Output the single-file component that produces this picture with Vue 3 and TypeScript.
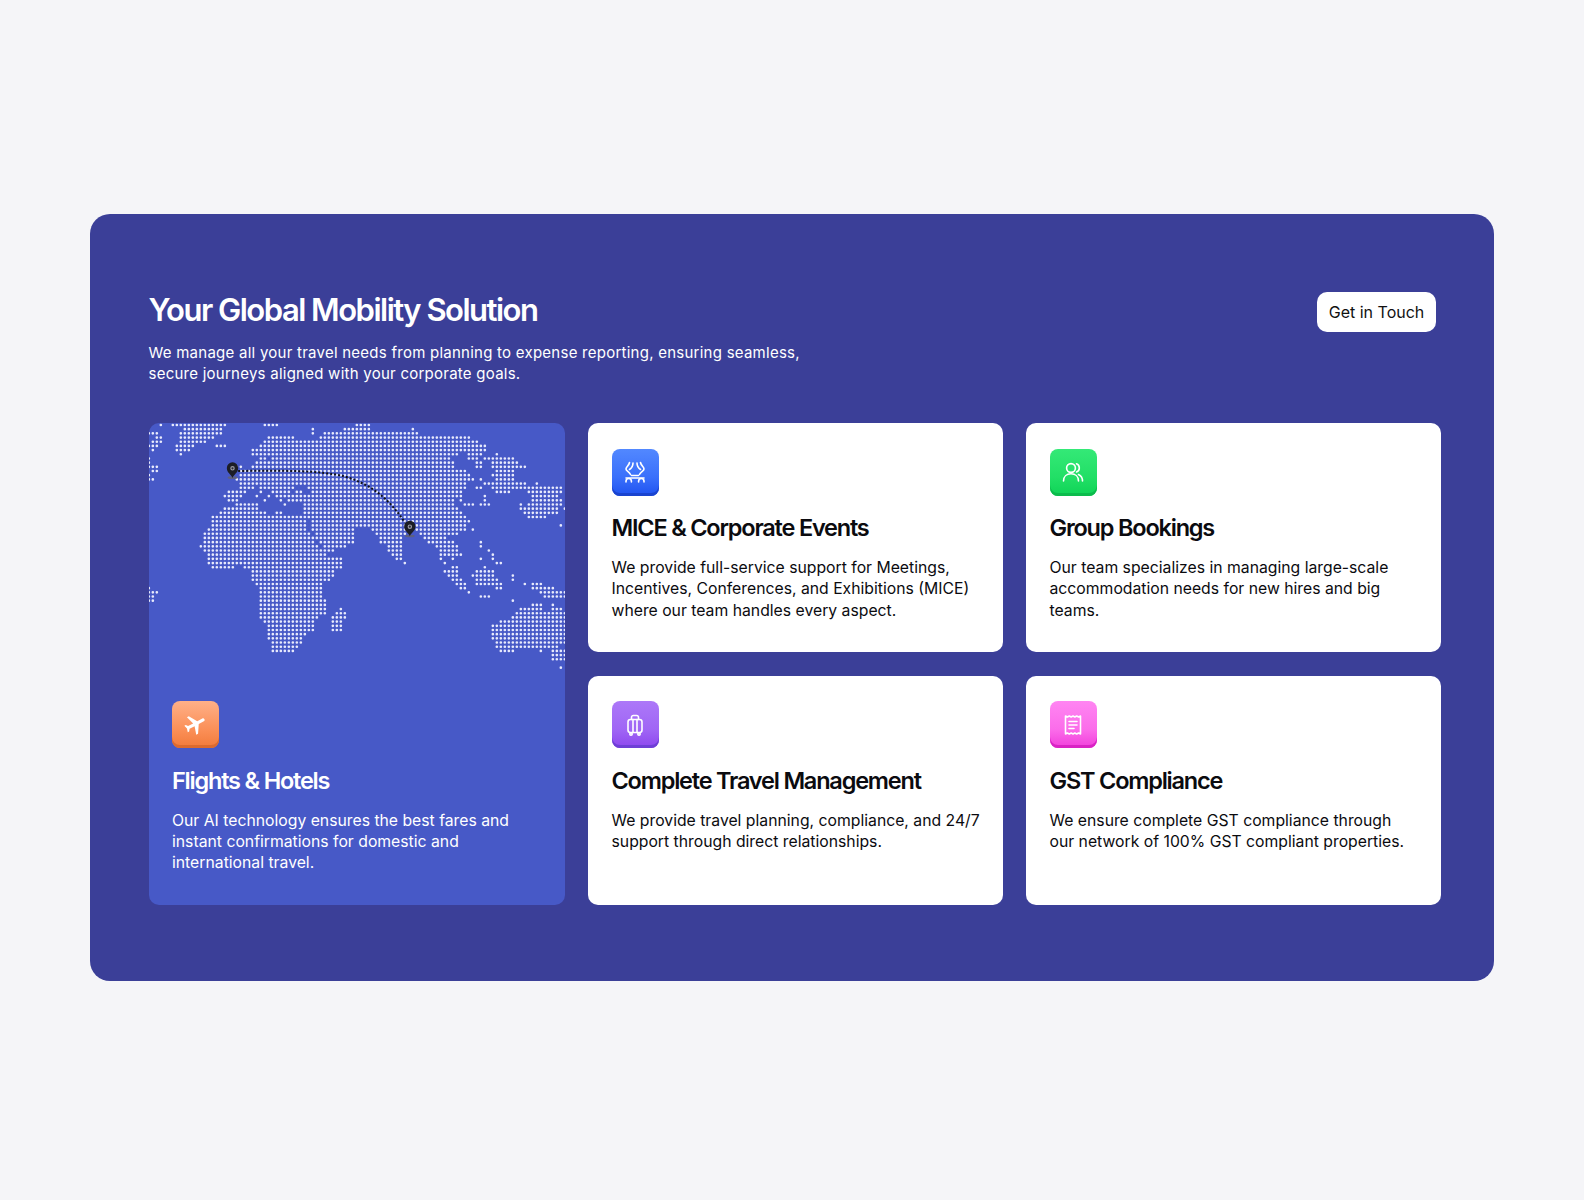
<script setup lang="ts">
import { computed } from 'vue'

const rows: number[][] = [
  [40,40,70,235,348,385,625,660],
  [110,225,490,500,595,665,790,790],
  [5,25,105,215,490,490,535,545,560,810],
  [25,45,105,195,360,430,515,960],
  [20,40,100,170,350,440,450,990],
  [5,30,90,130,205,230,340,440,445,1000,1015,1015],
  [12,12,90,120,315,1010],
  [100,100,315,930,965,1000,1050,1050],
  [5,5,335,355,380,900,965,985,1015,1100],
  [5,5,330,360,380,910,985,1000,1030,1110],
  [8,28,270,280,320,920,985,1005,1035,1130],
  [10,25,280,950,1045,1090],
  [8,8,280,960,1040,1100],
  [5,20,265,970,1005,1005,1045,1095],
  [275,955,1010,1130,1165,1165],
  [275,320,335,430,480,950,985,1005,1030,1130,1140,1240],
  [240,290,345,345,380,425,445,465,490,940,1050,1085,1145,1240],
  [228,280,325,325,360,360,385,410,420,935,1010,1010,1160,1230],
  [240,265,350,350,400,400,425,910,945,945,1015,1015,1150,1240],
  [272,330,410,410,470,920,950,975,995,1025,1115,1115,1145,1225,1240,1240],
  [235,330,470,930,1120,1230,1250,1250],
  [220,355,385,400,470,945,1135,1230],
  [195,470,480,955,1140,1195],
  [190,470,490,545,560,960],
  [190,470,490,620,590,950,1245,1245],
  [180,470,490,615,680,780,805,955,975,975],
  [175,480,505,610,690,770,815,930],
  [175,490,505,615,705,765,835,895],
  [175,500,520,610,705,765,845,910,1000,1000],
  [160,160,175,505,535,595,720,755,870,930,1005,1005],
  [170,530,535,555,725,755,875,925,1020,1020],
  [180,530,740,755,875,945,1040,1040],
  [180,530,540,585,745,760,880,880,920,920,1005,1005,1030,1030],
  [185,575,775,775,895,895,1045,1065],
  [195,255,290,575,910,925,1015,1015],
  [320,560,890,930,985,1030],
  [320,550,905,930,980,1030,1090,1090],
  [320,540,915,935,985,1030,1045,1045,1095,1095],
  [325,525,930,955,985,1030,1045,1060,1130,1130,1150,1180],
  [5,5,340,515,935,955,1050,1065,1160,1210],
  [5,25,345,515,965,965,1180,1250],
  [5,15,345,515,1000,1020,1190,1250],
  [5,20,345,530,1090,1090],
  [345,530,1150,1175,1215,1215],
  [345,535,585,585,1115,1175,1215,1240],
  [335,530,570,590,1105,1250],
  [345,505,560,590,1095,1250],
  [350,495,560,585,1065,1250],
  [360,495,560,580,1040,1250],
  [360,490,560,580,1030,1250],
  [360,470,1035,1250],
  [365,465,1040,1250],
  [375,455,1045,1250],
  [380,445,1050,1225],
  [380,435,1055,1090,1180,1180,1210,1250],
  [1215,1250],
  [1220,1250],
  [],
  [1245,1245],
]

const dotPath = computed(() => {
  let d = ''
  rows.forEach((r, i) => {
    const y = 30 + i * 12.55
    for (let p = 0; p < r.length; p += 2) {
      const first = Math.round((r[p] - 4) / 12)
      const last = Math.round((r[p + 1] - 4) / 12)
      for (let k = first; k <= last; k++) d += `M${k * 12 + 4} ${y}h0.01`
    }
  })
  return d
})

const cards = [
  { key: 'mice', tone: 'blue', title: 'MICE & Corporate Events', text: 'We provide full-service support for Meetings, Incentives, Conferences, and Exhibitions (MICE) where our team handles every aspect.' },
  { key: 'group', tone: 'green', title: 'Group Bookings', text: 'Our team specializes in managing large-scale accommodation needs for new hires and big teams.' },
  { key: 'travel', tone: 'purple', title: 'Complete Travel Management', text: 'We provide travel planning, compliance, and 24/7 support through direct relationships.' },
  { key: 'gst', tone: 'pink', title: 'GST Compliance', text: 'We ensure complete GST compliance through our network of 100% GST compliant properties.' },
]
</script>

<template>
  <div class="page">
    <section class="panel">
      <header class="head">
        <div>
          <h1>Your Global Mobility Solution</h1>
          <p>We manage all your travel needs from planning to expense reporting, ensuring seamless, secure journeys aligned with your corporate goals.</p>
        </div>
        <button class="cta">Get in Touch</button>
      </header>

      <div class="grid">
        <article class="card map-card">
          <svg class="map" viewBox="4.5 24 1251 810" aria-hidden="true">
            <path :d="dotPath" class="dots" />
            <path d="M272 168C400 166 520 166 590 184C680 210 730 260 772 322" class="route" />
            <g transform="translate(255 166)">
              <ellipse cx="0" cy="22" rx="15" ry="4" fill="#5d6080" />
              <path d="M0 23C-3 13-17 8-17 -7A17 17 0 0 1 17 -7C17 8 3 13 0 23Z" fill="#1c1d24" />
              <circle cx="0" cy="-6" r="5" fill="#2a2b33" stroke="#9a9aa3" stroke-width="3.5" />
            </g>
            <g transform="translate(787 341)">
              <ellipse cx="0" cy="22" rx="15" ry="4" fill="#5d6080" />
              <path d="M0 23C-3 13-17 8-17 -7A17 17 0 0 1 17 -7C17 8 3 13 0 23Z" fill="#1c1d24" />
              <circle cx="0" cy="-6" r="5" fill="#2a2b33" stroke="#9a9aa3" stroke-width="3.5" />
            </g>
          </svg>
          <div class="icon orange">
            <svg viewBox="0 0 24 24" width="25" height="25">
              <path fill="#fff" transform="rotate(62 12 12)" d="M21 16v-2l-8-5V3.5c0-.83-.67-1.5-1.5-1.5S10 2.67 10 3.5V9l-8 5v2l8-2.5V19l-2 1.5V22l3.5-1 3.5 1v-1.5L13 19v-5.5l8 2.5z" />
            </svg>
          </div>
          <h2>Flights &amp; Hotels</h2>
          <p>Our AI technology ensures the best fares and instant confirmations for domestic and international travel.</p>
        </article>

        <article v-for="c in cards" :key="c.key" class="card">
          <div class="icon" :class="c.tone">
            <svg viewBox="0 0 24 24" width="24" height="24" class="line">
              <template v-if="c.key === 'mice'">
                <path d="M6.5 2.5C6 5.5 3 7 3 9C3 11 6 11.5 7.5 14.5" />
                <path d="M17.5 2.5C18 5.5 21 7 21 9C21 11 18 11.5 16.5 14.5" />
                <path d="M10 3C10 7 8 8.5 6.5 9.5M14 3C14 7 16 8.5 17.5 9.5" />
                <path d="M8.5 15.5h7M3 18h18" />
                <path d="M3 22v-.8a2.7 2.7 0 0 1 5.4 0v.8M15.6 22v-.8a2.7 2.7 0 0 1 5.4 0v.8" />
              </template>
              <template v-else-if="c.key === 'group'">
                <circle cx="10" cy="8" r="4.4" />
                <path d="M2.5 21c0-4.4 3.2-7.2 7.5-7.2s7.5 2.8 7.5 7.2" />
                <path d="M15.5 3.8a4.4 4.4 0 0 1 0 8.2" />
                <path d="M17.5 14.5c2.6 1.2 4 3.5 4 6.5" />
              </template>
              <template v-else-if="c.key === 'travel'">
                <rect x="5" y="6.5" width="14" height="13" rx="2.4" />
                <path d="M8.5 6.5V4.4A1.9 1.9 0 0 1 10.4 2.5h3.2a1.9 1.9 0 0 1 1.9 1.9v2.1" />
                <path d="M10 6.5v13M14 6.5v13" />
                <circle cx="8" cy="21" r="1.2" />
                <circle cx="16" cy="21" r="1.2" />
              </template>
              <template v-else>
                <path d="M4.5 3l1.9 1 1.9-1 1.9 1 1.8-1 1.8 1 1.9-1 1.9 1 1.9-1v18l-1.9-1-1.9 1-1.9-1-1.8 1-1.8-1-1.9 1-1.9-1-1.9 1z" />
                <path d="M8 8.5h8M8 12h8M8 15.5h5" />
              </template>
            </svg>
          </div>
          <h2>{{ c.title }}</h2>
          <p>{{ c.text }}</p>
        </article>
      </div>
    </section>
  </div>
</template>

<style scoped>
.page {
  height: 1200px;
  box-sizing: border-box;
  padding: 214px 90px 0;
  background: #f5f5f8;
  font-family: Inter, "Noto Sans", sans-serif;
}
.panel {
  height: 767px;
  box-sizing: border-box;
  padding: 78px 53.5px 0 58.5px;
  border-radius: 20px;
  background: #3b3f98;
}
.head {
  display: flex;
  justify-content: space-between;
  align-items: flex-start;
  padding-right: 4.5px;
  height: 131px;
}
h1 {
  margin: 0;
  font-size: 31px;
  line-height: 36px;
  font-weight: 600;
  letter-spacing: -1.5px;
  color: #fff;
}
.head p {
  margin: 13.5px 0 0;
  width: 680px;
  font-size: 15px;
  line-height: 21.3px;
  letter-spacing: 0.25px;
  color: #fff;
}
.cta {
  width: 119px;
  height: 40px;
  margin-top: -0.5px;
  border: 0;
  border-radius: 10px;
  background: #fff;
  color: #111;
  font: 400 16px/20px Inter, sans-serif;
}
.grid {
  display: grid;
  grid-template-columns: 416.5px 415px 415px;
  grid-template-rows: 229px 229px;
  gap: 23.5px 23px;
}
.card {
  position: relative;
  overflow: hidden;
  box-sizing: border-box;
  padding: 25.5px 20px 0 23.5px;
  border-radius: 10px;
  background: #fff;
  color: #0b0b0f;
}
.map-card {
  grid-row: span 2;
  display: flex;
  flex-direction: column;
  justify-content: flex-end;
  padding-right: 23.5px;
  padding-bottom: 31px;
  background: #4759c7;
  color: #fff;
}
.map {
  position: absolute;
  top: 0;
  left: 0;
  width: 417px;
  height: 270px;
}
.dots {
  fill: none;
  stroke: #e8eafc;
  stroke-width: 8;
  stroke-linecap: round;
}
.route {
  fill: none;
  stroke: #11121a;
  stroke-width: 6;
  stroke-dasharray: 6 6;
}
.icon {
  position: relative;
  display: flex;
  align-items: center;
  justify-content: center;
  width: 47px;
  height: 47px;
  flex: none;
  border-radius: 8px;
}
.orange { background: linear-gradient(#ffb088, #fb9058 60%, #f27a3a); box-shadow: inset 0 -3px 0 #dc6a2e; }
.blue { background: linear-gradient(#5288ff, #3a70fb 60%, #1f52f0); box-shadow: inset 0 -3px 0 #1a44cf; }
.green { background: linear-gradient(#34e977, #22df66 60%, #0ed356); box-shadow: inset 0 -3px 0 #0cbb4c; }
.purple { background: linear-gradient(#ac78f8, #a066f5 60%, #8d46ee); box-shadow: inset 0 -3px 0 #6e3fd6; }
.pink { background: linear-gradient(#ff85f2, #fb6dea 60%, #f13edb); box-shadow: inset 0 -3px 0 #d922c4; }
.line {
  fill: none;
  stroke: #fff;
  stroke-width: 1.6;
  stroke-linecap: round;
  stroke-linejoin: round;
}
h2 {
  position: relative;
  margin: 16.5px 0 0;
  font-size: 23.5px;
  line-height: 32px;
  font-weight: 600;
  letter-spacing: -1.2px;
}
.card p {
  position: relative;
  margin: 13px 0 0;
  max-width: 370px;
  font-size: 15.75px;
  line-height: 21.3px;
}
</style>

<style>
body { margin: 0; }
</style>
